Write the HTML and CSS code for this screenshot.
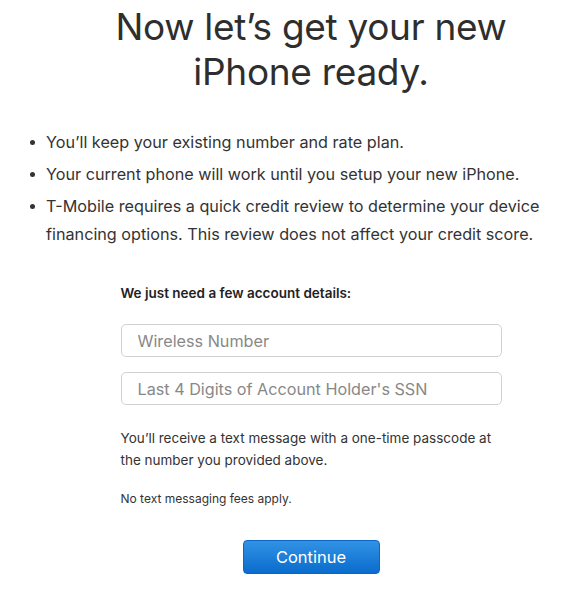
FILE: index.html
```html
<!DOCTYPE html>
<html>
<head>
<meta charset="utf-8">
<link rel="stylesheet" href="styles.css">
</head>
<body>
<div class="page">
  <h1 class="title">Now let’s get your new<br>iPhone ready.</h1>
  <ul class="points">
    <li>You’ll keep your existing number and rate plan.</li>
    <li>Your current phone will work until you setup your new iPhone.</li>
    <li>T-Mobile requires a quick credit review to determine your device financing options. This review does not affect your credit score.</li>
  </ul>
  <form class="details">
    <p class="label">We just need a few account details:</p>
    <input class="field" type="text" placeholder="Wireless Number">
    <input class="field" type="text" placeholder="Last 4 Digits of Account Holder's SSN">
    <p class="note">You’ll receive a text message with a one-time passcode at the number you provided above.</p>
    <p class="fine">No text messaging fees apply.</p>
    <div class="actions">
      <button class="continue" type="button">Continue</button>
    </div>
  </form>
</div>
</body>
</html>
```
FILE: styles.css
```css
html, body {
  margin: 0;
  padding: 0;
  overflow: hidden;
  background: #fff;
}
body {
  font-family: Inter, "Noto Sans", sans-serif;
  color: #333;
}
.page {
  margin-left: 46px;
  width: 530px;
}
.title {
  margin: 0;
  padding-top: 4px;
  text-align: center;
  font-size: 37px;
  line-height: 45px;
  font-weight: 400;
  color: #2e2e2e;
  letter-spacing: -0.3px;
}
.points {
  margin: 34px 0 0 0;
  padding: 0;
  list-style: none;
  font-size: 16.2px;
  line-height: 28px;
}
.points li {
  position: relative;
  margin-bottom: 4px;
}
.points li::before {
  content: "";
  position: absolute;
  left: -16px;
  top: 12px;
  width: 5px;
  height: 5px;
  border-radius: 50%;
  background: #333;
}
.details {
  width: 381px;
  margin: 37px auto 0;
}
.label {
  margin: 0 0 23px;
  font-size: 13.5px;
  font-weight: 600;
  color: #222;
}
.field {
  display: block;
  box-sizing: border-box;
  width: 381px;
  height: 33px;
  margin: 0 0 15px;
  padding: 0 16px;
  border: 1px solid #d2d2d2;
  border-radius: 5px;
  font-family: inherit;
  font-size: 16.2px;
  color: #333;
  outline: none;
}
.field::placeholder {
  color: #888;
}
.note {
  margin: 22px 0 0;
  font-size: 13.5px;
  line-height: 22px;
  color: #333;
}
.fine {
  margin: 20px 0 0;
  font-size: 12px;
  color: #333;
}
.actions {
  display: flex;
  justify-content: center;
  margin-top: 34px;
}
.continue {
  width: 137px;
  height: 34px;
  border: 1px solid #0a67c4;
  border-radius: 4px;
  background: linear-gradient(#3192e4, #0a6ccd);
  color: #fff;
  font-family: inherit;
  font-size: 16.5px;
  cursor: pointer;
}
```
